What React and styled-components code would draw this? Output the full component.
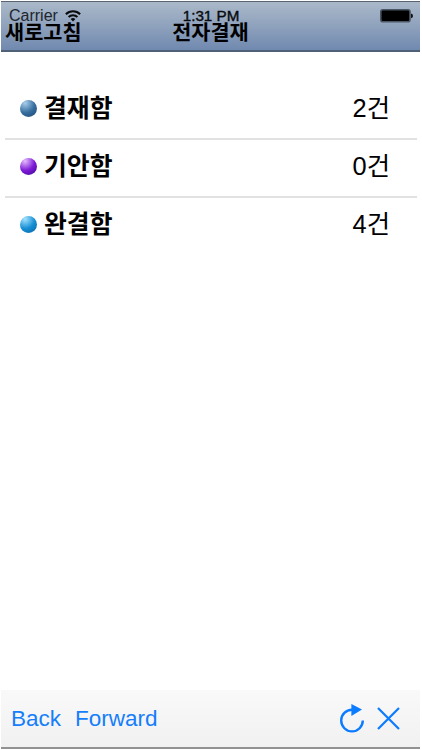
import React from "react"
import styled, { createGlobalStyle } from "styled-components"

const GlobalStyle = createGlobalStyle`
  * {
    box-sizing: border-box;
  }
  body {
    margin: 0;
    background: #fff;
    font-family: "Liberation Sans", "Noto Sans CJK KR", sans-serif;
    color: #000;
  }
`;

const Screen = styled.div`
  display: flex;
  flex-direction: column;
  width: 422px;
  height: 750px;
  padding: 1px 1px 1px;
  background: #fff;
`;

const Header = styled.header`
  position: relative;
  width: 419px;
  height: 51px;
  border-top: 1px solid #586472;
  border-bottom: 2px solid #4f6077;
  background: linear-gradient(#aab8c9, #8fa2bd 50%, #7089af);
`;

/* the system bar is drawn on top of the navigation bar */
const StatusBar = styled.div`
  position: absolute;
  top: 5px;
  left: 0;
  right: 0;
  display: grid;
  grid-template-columns: 1fr auto 1fr;
  align-items: center;
  height: 18px;
  padding: 0 7px 0 8px;
  line-height: 18px;
`;

const Carrier = styled.div`
  display: flex;
  align-items: center;
  gap: 7px;
  font-size: 16px;
  color: #20262e;
`;

const Clock = styled.div`
  font-size: 15.2px;
  color: #080a0d;
  -webkit-text-stroke: 0.4px #080a0d;
`;

const Battery = styled.svg`
  justify-self: end;
  display: block;
`;

const NavBar = styled.nav`
  display: grid;
  grid-template-columns: 1fr auto 1fr;
  align-items: center;
  height: 24px;
  margin-top: 17px;
  padding: 0 4px;
  font-family: "Noto Sans CJK KR", sans-serif;
  font-size: 20.8px;
  font-weight: 700;
  line-height: 24px;
`;

const List = styled.ul`
  flex: 1;
  margin: 0;
  padding: 30px 4px 0;
  list-style: none;
`;

const Row = styled.li`
  display: flex;
  align-items: center;
  width: 412px;
  height: 58px;
  padding: 0 27px 4px 15px;
  border-bottom: 2px solid #e2e2e2;

  &:last-child {
    border-color: transparent;
  }
`;

const Dot = styled.span`
  width: 17px;
  height: 17px;
  margin-right: 7px;
  border-radius: 50%;
  background: radial-gradient(circle at 30% 18%, ${props => props.$light} 0%, ${props => props.$mid} 52%, ${props => props.$dark} 100%);
`;

const Name = styled.span`
  flex: 1;
  margin-top: -4px;
  font-family: "Noto Sans CJK KR", sans-serif;
  font-size: 24.8px;
  font-weight: 700;
  line-height: 30px;
`;

const Count = styled.span`
  font-size: 25.4px;
  line-height: 30px;
`;

const Toolbar = styled.footer`
  display: flex;
  align-items: center;
  width: 419px;
  height: 59px;
  padding: 0 20px 0 10px;
  border-bottom: 2px solid #929292;
  background: linear-gradient(#f9f9f9, #f1f1f1);
`;

const ToolButton = styled.button`
  display: block;
  margin: 0 ${props => props.$gap || 0}px 0 0;
  padding: 0;
  border: 0;
  background: none;
  color: #157efb;
  font-family: inherit;
  font-size: 22.5px;
  line-height: 28px;

  svg {
    display: block;
  }
`;

const Spacer = styled.div`
  flex: 1;
`;

const boxes = [
  { name: "결재함", count: 2, light: "#a9cdec", mid: "#376f9f", dark: "#174672" },
  { name: "기안함", count: 0, light: "#e6bbff", mid: "#7d1bd6", dark: "#3c0290" },
  { name: "완결함", count: 4, light: "#a5e2ff", mid: "#168fd4", dark: "#0561a5" },
]

const WifiIcon = () => (
  <svg width="16" height="12" viewBox="0 0 16 12" fill="none" stroke="#080a0d" strokeWidth="2">
    <path d="M0.9 4.3C4.8 0.3 11.2 0.3 15.1 4.3" />
    <path d="M3.6 7C6 4.6 10 4.6 12.4 7" />
    <path d="M5.6 9Q8 6.9 10.4 9L8 11.6Z" fill="#080a0d" stroke="none" />
  </svg>
)

const BatteryIcon = () => (
  <Battery width="33" height="14" viewBox="0 0 33 14">
    <rect x="0.8" y="0.8" width="29.2" height="12" rx="2" fill="#000" stroke="#4b5665" strokeWidth="1.6" />
    <path d="M31 4.6Q33 5 33 6.9T31 9.2Z" fill="#111" />
  </Battery>
)

const ReloadIcon = () => (
  <svg width="26" height="30" viewBox="0 0 26 30">
    <path d="M13 5.8A10.8 10.8 0 1 0 23.8 16.6" fill="none" stroke="#0b7cff" strokeWidth="2.4" />
    <path d="M12.4 0L23 5.4L12.4 12Z" fill="#0b7cff" />
  </svg>
)

const CloseIcon = () => (
  <svg width="23" height="23" viewBox="0 0 23 23" fill="none" stroke="#0b7cff" strokeWidth="2.2">
    <path d="M1 1L22 22M22 1L1 22" />
  </svg>
)

const App = () => (
  <>
    <GlobalStyle />
    <Screen>
      <Header>
        <NavBar>
          <span>새로고침</span>
          <span>전자결재</span>
        </NavBar>
        <StatusBar>
          <Carrier>
            Carrier
            <WifiIcon />
          </Carrier>
          <Clock>1:31 PM</Clock>
          <BatteryIcon />
        </StatusBar>
      </Header>
      <List>
        {boxes.map(box => (
          <Row key={box.name}>
            <Dot $light={box.light} $mid={box.mid} $dark={box.dark} />
            <Name>{box.name}</Name>
            <Count>{box.count}건</Count>
          </Row>
        ))}
      </List>
      <Toolbar>
        <ToolButton $gap={14}>Back</ToolButton>
        <ToolButton>Forward</ToolButton>
        <Spacer />
        <ToolButton $gap={12} aria-label="Reload"><ReloadIcon /></ToolButton>
        <ToolButton aria-label="Stop"><CloseIcon /></ToolButton>
      </Toolbar>
    </Screen>
  </>
)

export default App
